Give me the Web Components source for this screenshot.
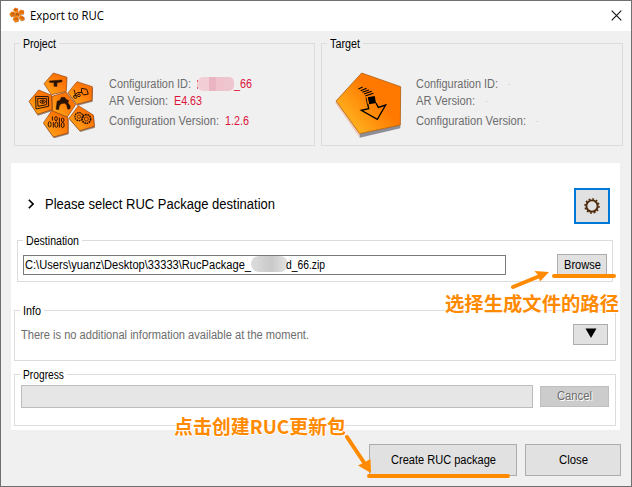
<!DOCTYPE html>
<html lang="en">
<head>
<meta charset="utf-8">
<title>Export to RUC</title>
<style>
html,body{margin:0;height:100%;overflow:hidden}
body{font-family:"Liberation Sans","Noto Sans CJK SC",sans-serif;font-size:12px;color:#000}
</style>
</head>
<body>
<export-dialog></export-dialog>
<script>
const define=(name,html,setup)=>customElements.define(name,class extends HTMLElement{
  connectedCallback(){
    if(this.shadowRoot)return;
    const t=document.createElement('template');
    t.innerHTML=html;
    this.attachShadow({mode:'open'}).append(t.content.cloneNode(true));
    if(setup)setup(this,this.shadowRoot);
  }
});

/* One line of text condensed to the width given in pixels. */
define('fit-text',`<style>
:host{display:inline-block;white-space:nowrap;line-height:16px;flex:none}
span{display:inline-block;transform-origin:0 50%}
</style><span><slot></slot></span>`,(host,root)=>{
  const w=+host.getAttribute('w'),s=root.querySelector('span');
  host.style.width=w+'px';
  const n=s.getBoundingClientRect().width;
  if(n)s.style.transform='scaleX('+w/n+')';
});

define('group-box',`<style>
:host{display:block;box-sizing:border-box}
fieldset{box-sizing:border-box;height:100%;margin:0;padding:0;min-width:0;border:1px solid #dcdcdc}
legend{margin-left:var(--legend,5px);padding:0 3px;height:13px;line-height:13px;font-size:12px}
legend fit-text{line-height:14px}
</style><fieldset><legend></legend><slot></slot></fieldset>`,(host,root)=>{
  const f=document.createElement('fit-text');
  f.setAttribute('w',host.getAttribute('w'));
  f.textContent=host.getAttribute('label');
  root.querySelector('legend').append(f);
});

define('push-button',`<style>
:host{display:flex;box-sizing:border-box;align-items:center;justify-content:center;background:#e1e1e1;border:1px solid #adadad}
:host([focused]){border:2px solid #0078d7}
:host([disabled]){background:#ccc;border-color:#bfbfbf;color:#6d6d6d}
</style><slot></slot>`);

define('title-bar',`<style>
:host{display:flex;align-items:center;height:30px;box-sizing:border-box;background:#fff;padding:0 9px 2px 8px;font:12px "Open Sans",sans-serif}
.x{margin-left:auto;width:11px;height:11px}
package-icon{--w:16px;--h:16px;--ink:.5;margin-right:5px}
fit-text{margin-top:2px}
</style><package-icon></package-icon><fit-text w="74">Export to RUC</fit-text>
<svg class="x" viewBox="0 0 11 11"><path d="M.7.7l9.6 9.6M10.3.7L.7 10.3" stroke="#111" stroke-width="1.1"/></svg>`);

define('package-icon',`<style>:host{display:block;flex:none}svg{display:block;width:var(--w,70px);height:var(--h,68px)}.ink{opacity:var(--ink,1)}</style>
<svg viewBox="51 30 210 204">
<defs><linearGradient id="g" x1="0" y1="1" x2="1" y2="0"><stop offset="0" stop-color="#ffb01e"/><stop offset=".6" stop-color="#ff7a08"/><stop offset="1" stop-color="#f96a00"/></linearGradient></defs>
<g fill="#6b4c38" opacity=".65" transform="translate(2 4)"><path d="M86 87l39 16 1 43-44 14-25-39zM126 148l48 22v46l-44 12-30-42zM205 134l45 28 3 34-44 13-32-37zM201 62l46 15-1 41-46 12-26-35z"/></g>
<g fill="url(#g)" stroke="#94400b" stroke-width="2" stroke-linejoin="round">
<path d="M130 36l41 13-2 42-45 10-22-33z"/><path d="M201 62l46 15-1 41-46 12-26-35z"/><path d="M86 87l39 16 1 43-44 14-25-39z"/><path d="M126 148l48 22v46l-44 12-30-42z"/><path d="M205 134l45 28 3 34-44 13-32-37z"/><path d="M126 106l42-13 29 38-25 37-44-18z"/></g>
<g class="ink" fill="none" stroke="#291300" stroke-width="3">
<path d="M118 60l38-3v5l-15 3v11h-9V65l-13-1z" fill="#291300" stroke-width="1.5"/>
<path d="M192 86l6 21M191 107l11-12 16-1M215 82l15 3 5 14-14 3-7-8z"/><circle cx="196" cy="107" r="5"/><circle cx="207" cy="103" r="4"/>
<path d="M77 106l38 1 1 29-38 8zM83 112l27 1v18l-26 5z"/><ellipse cx="98" cy="122" rx="8" ry="5"/><circle cx="98" cy="122" r="2" fill="#291300"/>
<path d="M141 121l9-4 4-8h10l6 7 6 2-2 8 7 9-1 9-7 1-3-12-5-6-12 1-5 7-2 11-8-1z" fill="#291300" stroke-width="1"/>
<ellipse cx="119" cy="190" rx="4.500" ry="8"/><path d="M130 183v17M148 183v17"/><ellipse cx="139" cy="191" rx="4.500" ry="8"/><ellipse cx="158" cy="192" rx="4.500" ry="8"/><path d="M127 166v13M148 170v13"/><ellipse cx="138" cy="173" rx="4" ry="6"/><ellipse cx="158" cy="177" rx="4" ry="6"/>
<circle cx="207" cy="167" r="12" stroke-dasharray="5 2" stroke-width="4"/><circle cx="207" cy="167" r="5" stroke-width="2"/><circle cx="229" cy="174" r="13" stroke-dasharray="5 2" stroke-width="5"/><circle cx="229" cy="174" r="6" stroke-width="2"/>
</g></svg>`);

define('target-icon',`<style>:host{display:block;flex:none}svg{display:block;width:67px;height:67px}</style>
<svg viewBox="75 126 201 201">
<defs><linearGradient id="t" x1=".1" y1=".9" x2=".65" y2=".45"><stop offset="0" stop-color="#ffbd25"/><stop offset="1" stop-color="#ff7900"/></linearGradient></defs>
<path d="M78 213l71 98v12l-73-104z" fill="#f2c9b6"/><path d="M149 311l122-26v10l-122 28z" fill="#8c8d96"/>
<path d="M155 129l117 41-1 115-122 26-71-98z" fill="url(#t)" stroke="#9d4f00" stroke-width="2"/>
<path d="M173 202l21-4 4 21-20 4z" fill="#000"/>
<path d="M145 177l13-6M152 182l18-7M157 187l20-7M162 192l23-8M166 198l24-8" stroke="#000" stroke-width="3.200"/>
<path d="M168 203l4 20" stroke="#000" stroke-width="2.500"/>
<path d="M173 222l3 14-22 5 48 27 25-43-22 7-7-13" fill="none" stroke="#000" stroke-width="4"/>
</svg>`);

define('config-card',`<style>
:host{display:block;width:301px;height:109px}
:host([kind=target]){width:302px}
group-box{height:109px}
.in{display:flex;height:95px;color:#6d6d6d}
.pic{width:94px;flex:none;padding:21px 0 0 12px;box-sizing:border-box}
:host([kind=target]) .pic{padding:22px 0 0 13px}
dl{margin:26px 0 0;display:grid;grid-template-rows:16px 18px 22px}
.r{display:flex;align-items:center;gap:6px}
.r fit-text{line-height:15px}
.v{color:#dc143c;display:flex;align-items:center}
i{display:block;width:36px;height:14px;border-radius:5px;background:linear-gradient(90deg,#f2cdd6 0 30%,#eab4c3 30% 50%,#f0c2cc 50% 72%,#eec6d0 72%)}
b{width:3px;height:1px;background:#dfdfdf;margin-left:4px}
.s{width:1px;height:9px;background:linear-gradient(#e65c68 20%,#f4c7c7 20% 80%,#e65c68 80%)}
</style><group-box><div class="in"><div class="pic"></div><dl>
<div class="r"><fit-text w="82">Configuration ID:</fit-text><span class="v id"></span></div>
<div class="r"><fit-text w="59">AR Version:</fit-text><span class="v ar"></span></div>
<div class="r"><fit-text w="110">Configuration Version:</fit-text><span class="v cv"></span></div>
</dl></div></group-box>`,(host,root)=>{
  const target=host.getAttribute('kind')==='target',q=s=>root.querySelector(s),g=q('group-box');
  const n=document.createElement('group-box');
  n.setAttribute('label',target?'Target':'Project');
  n.setAttribute('w',target?30:33);
  n.append(q('.in'));
  g.replaceWith(n);
  q('.pic').innerHTML=target?'<target-icon></target-icon>':'<package-icon></package-icon>';
  q('.id').innerHTML=target?'<b></b>':'<span class="s"></span><i></i><fit-text w="18">_66</fit-text>';
  q('.ar').innerHTML=target?'<b></b>':'<fit-text w="28">E4.63</fit-text>';
  q('.cv').innerHTML=target?'<b></b>':'<fit-text w="24">1.2.6</fit-text>';
});

define('destination-panel',`<style>
:host{display:flex;flex-direction:column;box-sizing:border-box;width:609px;height:267px;background:#fff;padding:25px 4px 4px 3px}
.head{display:flex;align-items:center;height:36px;padding:0 6px 0 14px}
.head fit-text{font-size:14px;margin-left:11px;margin-top:-4px}
.chev{width:6px;height:10px;margin-left:0;margin-top:-4px}
.head push-button{width:36px;height:36px;margin-left:auto}
.dest{height:48px;margin:10px 3px 0;--legend:5px}
.dest .row{display:flex;align-items:center;justify-content:space-between;padding:7px 5px 0}
.field{display:flex;align-items:center;width:483px;height:20px;box-sizing:border-box;border:1px solid #7a7a7a;padding-left:1px}
.mask{width:37px;height:16px;border-radius:8px;background:linear-gradient(90deg,#ddd,#c9c9c9 55%,#e4e4e4);margin:-2px -2px 0 0}
.dest push-button{width:50px;height:22px}
.info{height:57px;margin-top:22px}
.info .row{display:flex;align-items:center;justify-content:space-between;padding:7px 7px 0 6px;color:#6d6d6d}
.info push-button{width:35px;height:21px}
.prog{height:58px;margin-top:7px}
.prog .row{display:flex;align-items:center;justify-content:space-between;padding:4px 6px 0 6px}
.bar{width:512px;height:23px;box-sizing:border-box;border:1px solid #bcbcbc;background:#e6e6e6}
.prog push-button{width:69px;height:21px}
.prog push-button fit-text{text-shadow:1px 1px 0 #fff;margin-top:-2px}
svg{display:block}
</style>
<div class="head"><svg class="chev" viewBox="0 0 6 10"><path d="M.8.8L5 5 .8 9.2" fill="none" stroke="#000" stroke-width="1.6"/></svg>
<fit-text w="230">Please select RUC Package destination</fit-text>
<push-button focused><svg width="16" height="16" viewBox="-8 -8 16 16" fill="none" stroke="#4f2b0b"><circle r="5.600" stroke-width="1.900"/><circle r="7" stroke-width="1.500" stroke-dasharray="1.865 1.800"/></svg></push-button></div>
<group-box class="dest" label="Destination" w="53"><div class="row"><div class="field"><fit-text w="226">C:\\Users\\yuanz\\Desktop\\33333\\RucPackage_</fit-text><span class="mask"></span><fit-text w="39">d_66.zip</fit-text></div><push-button><fit-text w="37">Browse</fit-text></push-button></div></group-box>
<group-box class="info" label="Info" w="18"><div class="row"><fit-text w="288">There is no additional information available at the moment.</fit-text><push-button><svg width="12" height="10" style="margin-top:-4px"><path d="M.5.5h11L6 10z"/></svg></push-button></div></group-box>
<group-box class="prog" label="Progress" w="41"><div class="row"><div class="bar"></div><push-button disabled><fit-text w="35">Cancel</fit-text></push-button></div></group-box>`);

/* Orange marker notes lying over the dialog. */
define('marker-notes',`<style>
:host{position:absolute;inset:0;color:#ff8a00;font:bold 19px "Noto Sans CJK SC",sans-serif;pointer-events:none}
svg{position:absolute;inset:0}
fit-text{position:absolute;line-height:20px;text-shadow:1px 0 #fff,-1px 0 #fff,0 1px #fff,0 -1px #fff}
.a{left:445px;top:293px}.b{left:174px;top:416px}
</style>
<fit-text class="a" w="174">选择生成文件的路径</fit-text><fit-text class="b" w="172">点击创建RUC更新包</fit-text>
<svg width="632" height="487" fill="#ff8a00" stroke="#ff8a00" stroke-linecap="round">
<path d="M554 276H614M369 476H508" stroke-width="4"/>
<path d="M513 287L541 275.500M347 437L365 464" stroke-width="4"/>
<path d="M549 272L534.500 271L538 275L540 281.500Z" stroke="none"/>
<path d="M371 473L370.500 459L365 462L358 465.500Z" stroke="none"/>
</svg>`);

define('export-dialog',`<style>
:host{display:block;position:relative;box-sizing:border-box;width:632px;height:487px;border:1px solid #6f6f6f;background:#f0f0f0}
.cards{display:flex;gap:6px;padding:6px 0 0 13px}
destination-panel{margin:17px 0 0 10px}
.foot{display:flex;justify-content:flex-end;gap:8px;padding:14px 10px 0 0}
.foot push-button{width:96px;height:32px}
.foot .c{width:148px}
marker-notes{top:-1px;left:-1px}
</style>
<title-bar></title-bar>
<div class="cards"><config-card kind="project"></config-card><config-card kind="target"></config-card></div>
<destination-panel></destination-panel>
<div class="foot"><push-button class="c"><fit-text w="105">Create RUC package</fit-text></push-button><push-button><fit-text w="29">Close</fit-text></push-button></div>
<marker-notes></marker-notes>`);
</script>
</body>
</html>
